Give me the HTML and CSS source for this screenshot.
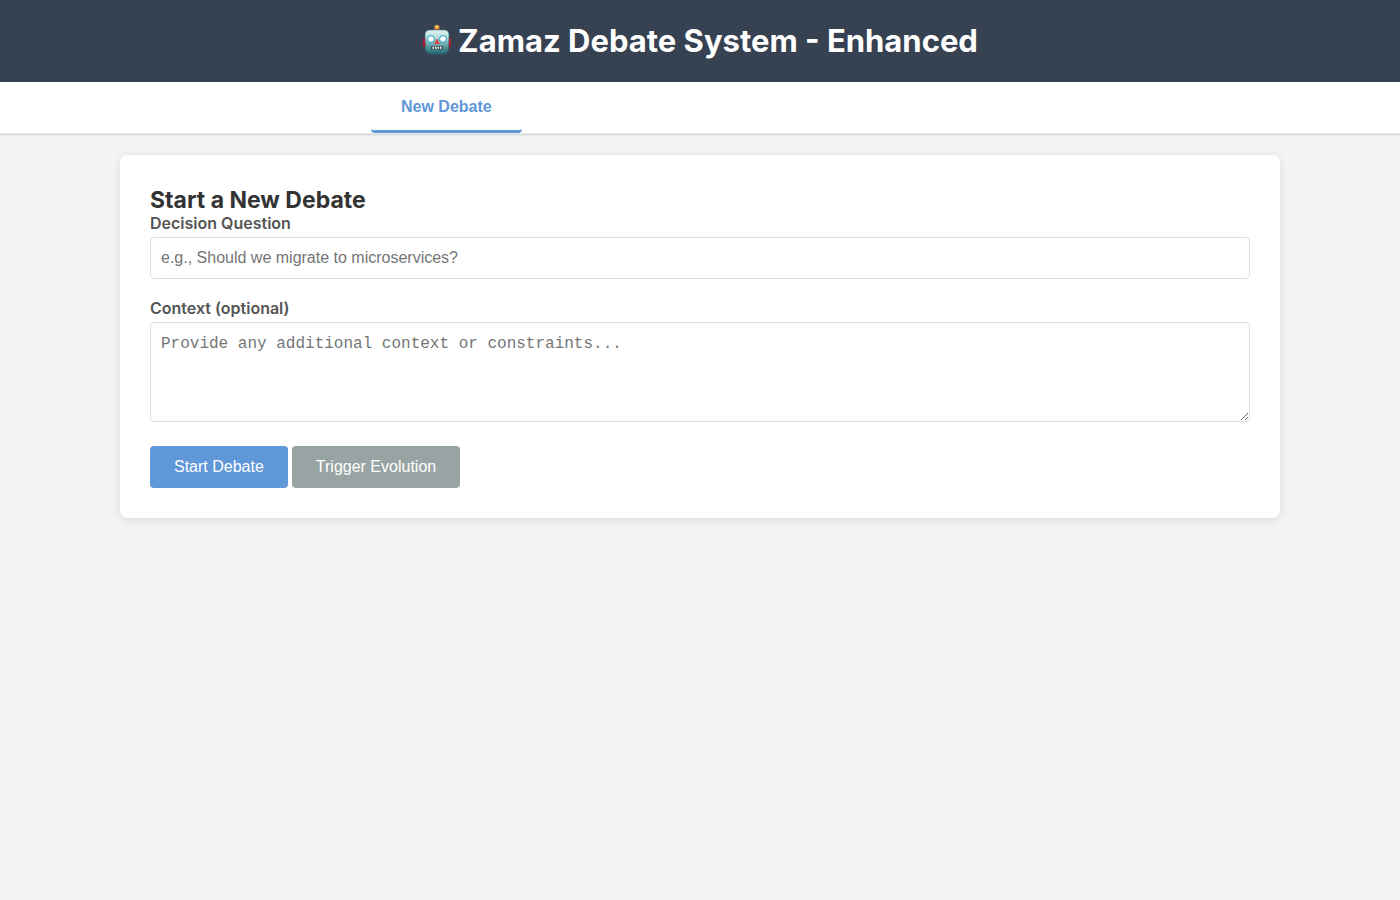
FILE: index.html
```html
<!DOCTYPE html>
<html lang="en">
<head>
<meta charset="utf-8">
<meta name="viewport" content="width=device-width, initial-scale=1">
<title>Zamaz Debate System - Enhanced</title>
<link rel="stylesheet" href="styles.css">
</head>
<body>
<header class="header">
  <h1 class="title">
    <svg class="robot" viewBox="0 1 30 32" aria-hidden="true">
      <defs>
        <linearGradient id="face" x1="0" y1="0" x2="0" y2="1">
          <stop offset="0" stop-color="#e2f0ee"/>
          <stop offset="0.3" stop-color="#b9dcdc"/>
          <stop offset="0.65" stop-color="#5fa0a6"/>
          <stop offset="1" stop-color="#20646d"/>
        </linearGradient>
        <radialGradient id="bulb" cx="0.45" cy="0.3" r="0.7">
          <stop offset="0" stop-color="#ffe08a"/>
          <stop offset="0.5" stop-color="#f5a020"/>
          <stop offset="1" stop-color="#8a5360"/>
        </radialGradient>
      </defs>
      <rect x="1" y="14" width="3" height="9" rx="1.4" fill="#b5182c"/>
      <rect x="26" y="14" width="3" height="9" rx="1.4" fill="#b5182c"/>
      <path d="M10.500 7.500Q11 4.500 15 4.500T19.500 7.500Z" fill="#68518a"/>
      <circle cx="15" cy="3.700" r="2.700" fill="url(#bulb)"/>
      <path d="M8 6H22Q27 6 27 11L26.500 25Q26 30 21 30H9Q4 30 3.500 25L3 11Q3 6 8 6Z" fill="url(#face)" stroke="#28717a" stroke-width="0.5"/>
      <circle cx="9" cy="15" r="3.800" fill="#2aa7c7"/>
      <circle cx="21" cy="15" r="3.800" fill="#2aa7c7"/>
      <circle cx="9" cy="15" r="2.800" fill="#fff"/>
      <circle cx="21" cy="15" r="2.800" fill="#fff"/>
      <path d="M15 14.500L18 20H12Z" fill="#dc4545"/>
      <rect x="9" y="22" width="12" height="3.400" rx="1" fill="#394e53"/>
      <path d="M10.500 23.700H19.500" stroke="#fff" stroke-width="2" stroke-dasharray="1.500 1"/>
    </svg>
    <span>Zamaz Debate System - Enhanced</span>
  </h1>
</header>
<nav class="nav">
  <div class="tabs">
    <button class="tab" type="button">New Debate</button>
  </div>
</nav>
<main class="container">
  <form class="card">
    <h2 class="heading">Start a New Debate</h2>
    <div class="group">
      <label class="label" for="question">Decision Question</label>
      <input class="field" id="question" type="text" placeholder="e.g., Should we migrate to microservices?">
    </div>
    <div class="group">
      <label class="label" for="context">Context (optional)</label>
      <textarea class="field area" id="context" placeholder="Provide any additional context or constraints..."></textarea>
    </div>
    <div class="actions">
      <button class="button" type="button">Start Debate</button>
      <button class="button secondary" type="button">Trigger Evolution</button>
    </div>
  </form>
</main>
</body>
</html>
```
FILE: styles.css
```css
* {
  box-sizing: border-box;
  margin: 0;
  padding: 0;
}

body {
  font-family: Inter, "Liberation Sans", sans-serif;
  font-size: 16px;
  color: #333;
  background: #f4f4f4;
}

.header {
  padding: 20px;
  color: #fff;
  background: #364152;
}

.title {
  display: flex;
  justify-content: center;
  align-items: center;
  gap: 6px;
  font-size: 31px;
  font-weight: 700;
  line-height: 42px;
}

.robot {
  width: 30px;
  height: 32px;
}

.nav {
  background: #fff;
  border-bottom: 1px solid #e6e6e6;
  box-shadow: 0 1px 2px rgba(0, 0, 0, 0.15);
}

.tabs {
  display: flex;
  max-width: 658px;
  margin: 0 auto;
}

.tab {
  padding: 16px 30px 14px;
  font-family: "Liberation Sans", Arial, sans-serif;
  font-size: 16px;
  font-weight: 700;
  line-height: 18px;
  color: #5f97d9;
  background: none;
  border: 0;
  border-bottom: 3px solid #5f97d9;
  border-radius: 4px;
}

.container {
  max-width: 1200px;
  margin: 0 auto;
  padding: 21px 20px;
}

.card {
  padding: 32px 30px 30px;
  background: #fff;
  border-radius: 8px;
  box-shadow: 0 2px 10px rgba(0, 0, 0, 0.1);
}

.heading {
  font-size: 23px;
  line-height: 27px;
}

.group {
  margin-bottom: 20px;
}

.label {
  display: block;
  margin-bottom: 4px;
  font-weight: 600;
  line-height: 19px;
  color: #555;
}

.field {
  display: block;
  width: 100%;
  padding: 10px;
  font-family: "Liberation Sans", Arial, sans-serif;
  font-size: 16px;
  line-height: 20px;
  color: #333;
  background: #fff;
  border: 1px solid #ddd;
  border-radius: 4px;
}

.field::placeholder {
  color: #757575;
}

.area {
  height: 100px;
  font-family: "Liberation Mono", "Courier New", monospace;
  line-height: 22px;
  resize: vertical;
}

.actions {
  display: flex;
  flex-wrap: wrap;
  gap: 4px;
  padding-top: 4px;
}

.button {
  padding: 12px 24px;
  font-family: "Liberation Sans", Arial, sans-serif;
  font-size: 16px;
  line-height: 18px;
  color: #fff;
  background: #5f97d9;
  border: 0;
  border-radius: 4px;
}

.secondary {
  background: #98a4a3;
}
```
